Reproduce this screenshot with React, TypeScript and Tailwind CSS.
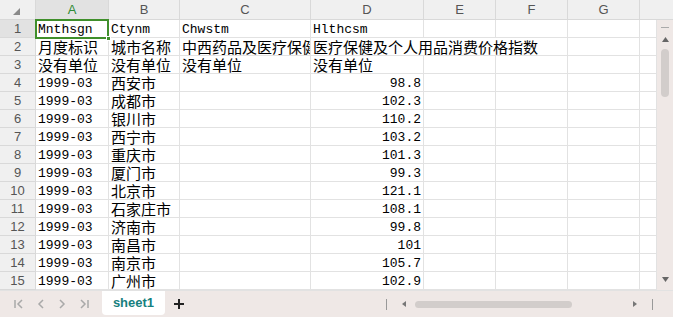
import React from "react";

const cols = [
  { name: "A", w: "w-[73px]" },
  { name: "B", w: "w-[71px]" },
  { name: "C", w: "w-[131px]" },
  { name: "D", w: "w-[113px]" },
  { name: "E", w: "w-[72px]" },
  { name: "F", w: "w-[72px]" },
  { name: "G", w: "w-[72px]" },
];

const data: [string, string, string][] = [
  ["1999-03", "西安市", "98.8"],
  ["1999-03", "成都市", "102.3"],
  ["1999-03", "银川市", "110.2"],
  ["1999-03", "西宁市", "103.2"],
  ["1999-03", "重庆市", "101.3"],
  ["1999-03", "厦门市", "99.3"],
  ["1999-03", "北京市", "121.1"],
  ["1999-03", "石家庄市", "108.1"],
  ["1999-03", "济南市", "99.8"],
  ["1999-03", "南昌市", "101"],
  ["1999-03", "南京市", "105.7"],
  ["1999-03", "广州市", "102.9"],
];

const mono = "font-['Liberation_Mono','Noto_Sans_CJK_SC',monospace] text-[13px] leading-[19px]";
const cjk = "font-['Noto_Sans_CJK_SC',sans-serif] text-[15px] leading-[14px] pt-[2px]";
const cell =
  "h-[18px] shrink-0 border-r border-b border-[#e2e2e2] overflow-hidden whitespace-nowrap px-[2px] text-black";

function RowHead({ n, active }: { n: number; active?: boolean }) {
  return (
    <div
      className={`h-[18px] w-[36px] shrink-0 border-r border-b border-[#d9d9d9] text-center text-[13px] leading-[18px] text-[#555] font-['Liberation_Sans',sans-serif] ${
        active ? "bg-[#e2e2e2]" : "bg-[#f0f0f0]"
      }`}
    >
      {n}
    </div>
  );
}

function Tail() {
  return <div className={`${cell} flex-1`} />;
}

export default function App() {
  return (
    <div className="flex h-[317px] w-[673px] flex-col overflow-hidden bg-white select-none">
      {/* column headers */}
      <div className="flex h-[20px] shrink-0 bg-[#f0f0f0]">
        <div className="relative w-[36px] shrink-0 border-r border-b border-[#d9d9d9]">
          <svg className="absolute left-[13px] top-[8px]" width="8" height="7" viewBox="0 0 8 7">
            <polygon points="7,0 7,7 0,7" fill="#8a8a8a" />
          </svg>
        </div>
        {cols.map((c, i) => (
          <div
            key={c.name}
            className={`${c.w} shrink-0 border-r border-b border-[#d9d9d9] text-center text-[13px] leading-[19px] font-['Liberation_Sans',sans-serif] ${
              i === 0 ? "bg-[#e2e2e2] text-[#2e8b35]" : "text-[#555]"
            }`}
          >
            {c.name}
          </div>
        ))}
        <div className="flex-1 border-b border-[#d9d9d9]" />
      </div>

      <div className="flex min-h-0 flex-1">
        {/* grid body */}
        <div className="relative flex min-w-0 flex-1 flex-col">
          <div className="flex">
            <RowHead n={1} active />
            <div className={`${cell} ${cols[0].w} ${mono}`}>Mnthsgn</div>
            <div className={`${cell} ${cols[1].w} ${mono}`}>Ctynm</div>
            <div className={`${cell} ${cols[2].w} ${mono}`}>Chwstm</div>
            <div className={`${cell} ${cols[3].w} ${mono}`}>Hlthcsm</div>
            <div className={`${cell} ${cols[4].w}`} />
            <div className={`${cell} ${cols[5].w}`} />
            <div className={`${cell} ${cols[6].w}`} />
            <Tail />
          </div>
          <div className="flex">
            <RowHead n={2} />
            <div className={`${cell} ${cols[0].w} ${cjk}`}>月度标识</div>
            <div className={`${cell} ${cols[1].w} ${cjk}`}>城市名称</div>
            <div className={`${cell} ${cols[2].w} ${cjk} px-[1px]`}>中西药品及医疗保健</div>
            <div className={`${cell} w-[257px] ${cjk} px-[1px]`}>医疗保健及个人用品消费价格指数</div>
            <div className={`${cell} ${cols[6].w}`} />
            <Tail />
          </div>
          <div className="flex">
            <RowHead n={3} />
            <div className={`${cell} ${cols[0].w} ${cjk}`}>没有单位</div>
            <div className={`${cell} ${cols[1].w} ${cjk}`}>没有单位</div>
            <div className={`${cell} ${cols[2].w} ${cjk}`}>没有单位</div>
            <div className={`${cell} ${cols[3].w} ${cjk}`}>没有单位</div>
            <div className={`${cell} ${cols[4].w}`} />
            <div className={`${cell} ${cols[5].w}`} />
            <div className={`${cell} ${cols[6].w}`} />
            <Tail />
          </div>
          {data.map(([m, city, v], i) => (
            <div key={i} className="flex">
              <RowHead n={i + 4} />
              <div className={`${cell} ${cols[0].w} ${mono}`}>{m}</div>
              <div className={`${cell} ${cols[1].w} ${cjk}`}>{city}</div>
              <div className={`${cell} ${cols[2].w}`} />
              <div className={`${cell} ${cols[3].w} ${mono} text-right`}>{v}</div>
              <div className={`${cell} ${cols[4].w}`} />
              <div className={`${cell} ${cols[5].w}`} />
              <div className={`${cell} ${cols[6].w}`} />
              <Tail />
            </div>
          ))}
          {/* selection box on A1 */}
          <div className="pointer-events-none absolute left-[35px] top-[-1px] h-[20px] w-[74px] border-2 border-[#3f8f2b]">
            <div className="absolute bottom-[-4px] right-[-4px] h-[5px] w-[5px] border border-white bg-[#3f8f2b]" />
          </div>
        </div>

        {/* vertical scrollbar */}
        <div className="flex w-[16px] shrink-0 flex-col items-center bg-[#efe8e6]">
          <div className="mt-[7px] h-[1px] w-[8px] bg-[#aaa]" />
          <svg className="mt-[9px]" width="7" height="5" viewBox="0 0 7 5">
            <polygon points="3.5,0 7,5 0,5" fill="#666" />
          </svg>
          <div className="mt-[7px] h-[48px] w-[8px] rounded-full bg-[#d2cdcb]" />
          <div className="flex-1" />
          <svg className="mb-[8px]" width="7" height="5" viewBox="0 0 7 5">
            <polygon points="0,0 7,0 3.5,5" fill="#666" />
          </svg>
        </div>
      </div>

      {/* bottom bar */}
      <div className="flex h-[27px] shrink-0 items-start border-t border-[#e2e2e2] bg-[#efe8e6]">
        <div className="flex h-[26px] w-[102px] items-center gap-[13px] pl-[14px] text-[#aaa]">
          <svg width="10" height="10" viewBox="0 0 10 10" fill="none" stroke="#a9a9a9" strokeWidth="1.5">
            <path d="M1 1v8M8 1L4 5l4 4" />
          </svg>
          <svg width="8" height="10" viewBox="0 0 8 10" fill="none" stroke="#a9a9a9" strokeWidth="1.5">
            <path d="M6 1L2 5l4 4" />
          </svg>
          <svg width="8" height="10" viewBox="0 0 8 10" fill="none" stroke="#a9a9a9" strokeWidth="1.5">
            <path d="M2 1l4 4-4 4" />
          </svg>
          <svg width="10" height="10" viewBox="0 0 10 10" fill="none" stroke="#a9a9a9" strokeWidth="1.5">
            <path d="M2 1l4 4-4 4M9 1v8" />
          </svg>
        </div>
        <div className="flex h-[24px] w-[63px] items-center justify-center rounded-b-[4px] bg-white text-[13px] font-bold text-[#16807e] font-['Liberation_Sans',sans-serif]">
          sheet1
        </div>
        <div className="ml-[8px] flex h-[26px] items-center">
          <svg width="12" height="12" viewBox="0 0 12 12" stroke="#222" strokeWidth="2">
            <path d="M6 1v10M1 6h10" />
          </svg>
        </div>
        <div className="flex-1" />
        <div className="flex h-[26px] items-center">
          <div className="h-[11px] w-[1px] bg-[#999]" />
          <svg className="ml-[15px]" width="4" height="6" viewBox="0 0 4 6">
            <polygon points="4,0 4,6 0,3" fill="#777" />
          </svg>
          <div className="ml-[9px] h-[7px] w-[157px] rounded-full bg-[#d2cdcb]" />
          <svg className="ml-[61px]" width="4" height="6" viewBox="0 0 4 6">
            <polygon points="0,0 4,3 0,6" fill="#777" />
          </svg>
          <div className="ml-[15px] mr-[20px] h-[11px] w-[1px] bg-[#999]" />
        </div>
      </div>
    </div>
  );
}
